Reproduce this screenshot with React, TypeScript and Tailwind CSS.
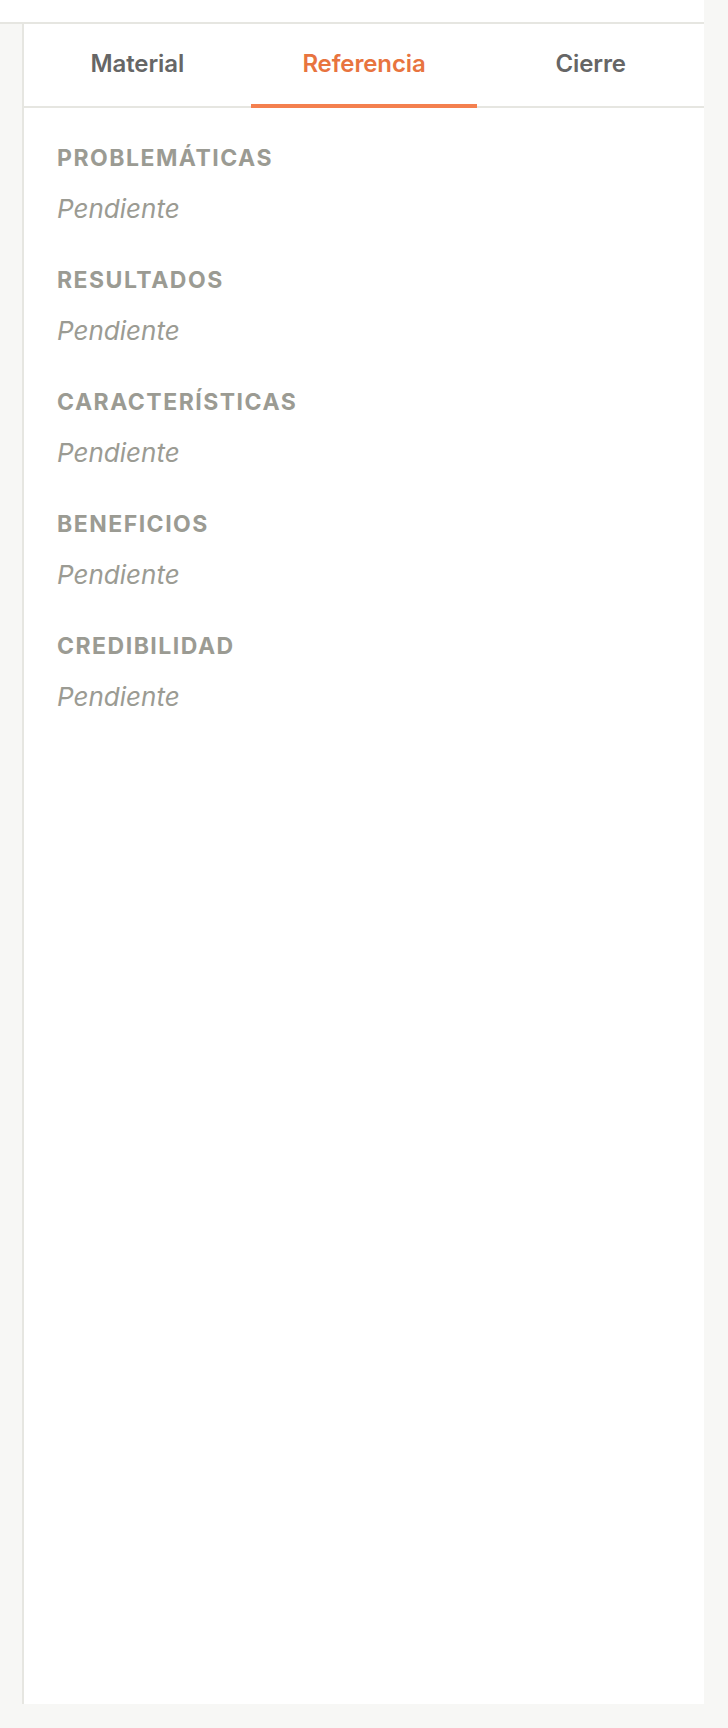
import { useState } from 'react';

const tabs = ['Material', 'Referencia', 'Cierre'];

const sections = ['Problemáticas', 'Resultados', 'Características', 'Beneficios', 'Credibilidad'];

export default function App() {
  const [active, setActive] = useState('Referencia');

  return (
    <div className="w-[728px] h-[1728px] bg-[#f7f7f5] font-['Inter',sans-serif]">
      <div className="w-[704px] h-[24px] bg-white border-b-2 border-[#e6e6e1]" />
      <div className="flex w-[704px]">
        <div className="w-[22px] shrink-0" />
        <div className="flex-1 h-[1680px] bg-white border-l-2 border-[#e6e6e1] flex flex-col">
          {/* Tabs */}
          <div className="flex h-[84px] border-b-2 border-[#e6e6e1]">
            {tabs.map(tab => (
              <button
                key={tab}
                onClick={() => setActive(tab)}
                className={`flex-1 relative flex items-center justify-center text-[24px] font-semibold tracking-[-0.005em] ${
                  active === tab ? 'text-[#e8743f]' : 'text-[#666666]'
                }`}
              >
                <span className="-mt-[2px]">{tab}</span>
                {active === tab && (
                  <span className="absolute left-0 right-0 -bottom-[2px] h-[4px] bg-[#f4804f]" />
                )}
              </button>
            ))}
          </div>

          {/* Contenido */}
          <div className="px-[33px] pt-[36px] flex flex-col gap-[41px]">
            {sections.map(title => (
              <div key={title}>
                <h3 className="text-[23px] leading-[28px] font-bold uppercase tracking-[0.065em] text-[#9b9b93] mb-[21px]">
                  {title}
                </h3>
                <p className="text-[26px] leading-[32px] italic text-[#9b9b93]">Pendiente</p>
              </div>
            ))}
          </div>
        </div>
      </div>
    </div>
  );
}
